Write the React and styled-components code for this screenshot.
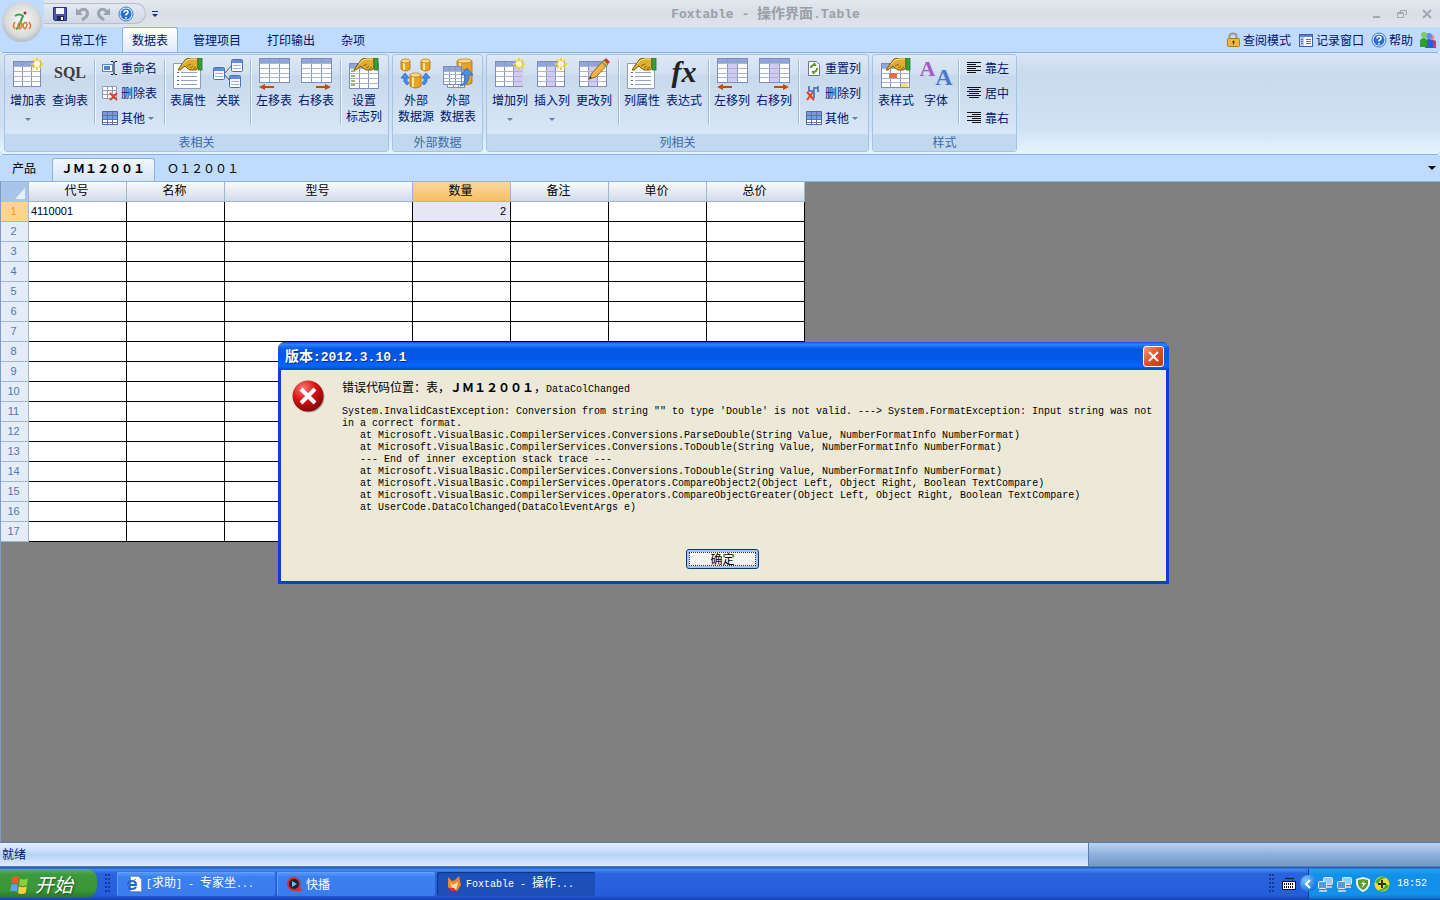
import React from "react";
import styled, { createGlobalStyle, css } from "styled-components";

const COLUMNS = [
  { name: "代号", width: 98 },
  { name: "名称", width: 98 },
  { name: "型号", width: 188 },
  { name: "数量", width: 98, number: true },
  { name: "备注", width: 98 },
  { name: "单价", width: 98 },
  { name: "总价", width: 98 },
];

const ROWS = Array.from({ length: 17 }, (_, i) => (i === 0 ? { 代号: "4110001", 数量: "2" } : {}));

const STACK_TRACE = `System.InvalidCastException: Conversion from string "" to type 'Double' is not valid. ---> System.FormatException: Input string was not in a correct format.
   at Microsoft.VisualBasic.CompilerServices.Conversions.ParseDouble(String Value, NumberFormatInfo NumberFormat)
   at Microsoft.VisualBasic.CompilerServices.Conversions.ToDouble(String Value, NumberFormatInfo NumberFormat)
   --- End of inner exception stack trace ---
   at Microsoft.VisualBasic.CompilerServices.Conversions.ToDouble(String Value, NumberFormatInfo NumberFormat)
   at Microsoft.VisualBasic.CompilerServices.Operators.CompareObject2(Object Left, Object Right, Boolean TextCompare)
   at Microsoft.VisualBasic.CompilerServices.Operators.CompareObjectGreater(Object Left, Object Right, Boolean TextCompare)
   at UserCode.DataColChanged(DataColEventArgs e)`;

/* ---------- icons ---------- */

// 表格底图, hl: 高亮列 (0-3)
function Sheet({ x = 1, y = 3, w = 27, h = 25, hl = -1 }) {
  const cw = w / 3;
  const rh = (h - 5) / 4;
  return (
    <g>
      <rect x={x + 0.5} y={y + 0.5} width={w} height={h} fill="#fff" stroke="#7d8fb5" />
      {hl >= 0 && <rect x={x + 1 + cw * hl} y={y + 5} width={cw} height={h - 5} fill="#d3c9f5" />}
      <rect x={x + 1} y={y + 1} width={w - 1} height="4" fill="#8ea6dc" />
      <path
        d={[1, 2].map((i) => `M${Math.round(x + cw * i) + 0.5} ${y + 1}v${h - 1}`).join("")}
        stroke="#8b97b8"
      />
      <path
        d={[0, 1, 2, 3].map((i) => `M${x + 1} ${Math.round(y + 5 + rh * i) + 0.5}h${w - 1}`).join("")}
        stroke="#a9b4cd"
      />
    </g>
  );
}

const Star = () => (
  <g>
    <path d="M25 0v12M19 6h12M21 2l8 8M29 2l-8 8" stroke="#f5cf2e" strokeWidth="2" />
    <circle cx="25" cy="6" r="3" fill="#fffbd0" />
  </g>
);

const Hand = () => (
  <g>
    <path d="M6 12l4-6 4-5 5-1h7v9l-2 3h-6l-3-2-2-2-5 4z" fill="#dfae2c" stroke="#7a5410" />
    <path d="M15 8l4-2M18 10l3-2M21 11l3-2" stroke="#8c6312" fill="none" />
    <path d="M11 6l4-4 4-1h6" stroke="#fbe68a" fill="none" />
    <rect x="26" y="0" width="4" height="12" fill="#37a03c" stroke="#1f7025" strokeWidth="0.8" />
  </g>
);

const Paper = () => (
  <g>
    <path d="M1.500 5.500h27v25h-27z" fill="#fff" stroke="#8f9bb8" />
    <path d="M5 14.500h2M5 18.500h2M5 22.500h2M5 26.500h2" stroke="#52679b" />
    <path d="M9 14.500h16M9 18.500h16M9 22.500h16M9 26.500h16" stroke="#96a3bf" />
  </g>
);

const Cylinder = ({ x, y, w = 9, h = 12 }) => (
  <g>
    <path
      d={`M${x} ${y + 2}v${h - 4}q${w / 2} 4 ${w} 0v-${h - 4}z`}
      fill="#e8a321"
      stroke="#a8690c"
      strokeWidth="0.8"
    />
    <path d={`M${x + 3} ${y + 3}v${h - 4}`} stroke="#ffe59a" strokeWidth="2" />
    <ellipse cx={x + w / 2} cy={y + 2} rx={w / 2} ry="2" fill="#fbdc82" stroke="#b97a14" strokeWidth="0.8" />
  </g>
);

const MiniWindow = ({ x, y }) => (
  <g>
    <rect x={x + 0.5} y={y + 0.5} width="11" height="12" rx="1" fill="#fff" stroke="#4771b8" />
    <rect x={x + 1} y={y + 1} width="10" height="3" fill="#5d8ee0" />
    <path d={`M${x + 2} ${y + 6.5}h8M${x + 2} ${y + 9.5}h8`} stroke="#9bb0d8" />
  </g>
);

const LeftArrow = () => <path d="M1 29l6-3v2h9v2H7v2z" fill="#c24a10" />;
const RightArrow = () => <path d="M31 29l-6-3v2h-9v2h9v2z" fill="#c24a10" />;

const BIG_ICONS = {
  addTable: <><Sheet /><Star /></>,
  tableProps: <><Paper /><Hand /></>,
  relation: (
    <>
      <path d="M12 16l8-9M12 16l7 8" stroke="#555" fill="none" />
      <MiniWindow x={1} y={9} />
      <MiniWindow x={19} y={1} />
      <MiniWindow x={17} y={17} />
    </>
  ),
  tableLeft: <><Sheet y={0} w={30} h={24} /><LeftArrow /></>,
  tableRight: <><Sheet y={0} w={30} h={24} /><RightArrow /></>,
  flagCol: <><Sheet y={5} w={29} h={25} /><path d="M3 13h4M3 18h4M3 23h4M3 27h4" stroke="#9fb667" strokeWidth="2" /><Hand /></>,
  source: (
    <>
      <Cylinder x={1} y={1} />
      <Cylinder x={21} y={1} />
      <Cylinder x={10} y={15} w={11} h={15} />
      <path d="M7 27q-4-3-3-7H1l4-5 4 5H7q-1 3 2 5zM24 27q4-3 3-7h3l-4-5-4 5h2q1 3-2 5z" fill="#4a8ee8" stroke="#235bb5" strokeWidth="0.7" />
    </>
  ),
  sourceTable: (
    <>
      <Cylinder x={15} y={1} w={15} h={26} />
      <Sheet x={5} y={11} w={17} h={18} />
      <Sheet x={1} y={8} w={18} h={18} />
      <path d="M18 28q6-3 5-11h-4l6-7 6 7h-4q0 10-9 11z" fill="#4a8ee8" stroke="#235bb5" strokeWidth="0.7" />
    </>
  ),
  addCol: <><Sheet hl={2} /><Star /></>,
  insertCol: <><Sheet hl={1} /><Star /></>,
  editCol: (
    <>
      <Sheet hl={1} />
      <path d="M11 21l3-6L26 2l4 4-12 13z" fill="#f3b245" stroke="#9c6415" />
      <path d="M26 2l2-2 4 4-2 2z" fill="#c33b3b" />
      <path d="M24 4l4 4" stroke="#7fa860" strokeWidth="2" />
      <path d="M11 21l1-3 2 2z" fill="#333" />
    </>
  ),
  colLeft: <><Sheet y={0} w={30} h={24} hl={1} /><LeftArrow /></>,
  colRight: <><Sheet y={0} w={30} h={24} hl={1} /><RightArrow /></>,
  tableStyle: (
    <>
      <Sheet y={5} w={28} h={24} />
      <path d="M9 15h8v5H9z" fill="#ef6a35" />
      <path d="M21 25h7v4h-7z" fill="#f5dc8a" />
      <Hand />
    </>
  ),
};

const SMALL_ICONS = {
  rename: (
    <>
      <rect x="0.5" y="4.5" width="10" height="7" fill="#fff" stroke="#5b83c4" />
      <rect x="2" y="6" width="6" height="4" fill="#4e84d6" />
      <path d="M9 1.500h2l1 1 1-1h2M9 14.500h2l1-1 1 1h2M12 2v12" stroke="#111" fill="none" />
    </>
  ),
  deleteTable: (
    <>
      <path d="M.5 1.5h14v12H.5zM.5 5.5h14M.5 9.5h14M5.5 1.5v12M10.5 1.5v12" fill="#fff" stroke="#929bb0" />
      <path d="M8 8l7 7M15 8l-7 7" stroke="#e0412b" strokeWidth="2" />
    </>
  ),
  other: (
    <>
      <path d="M.5 1.5h15v13H.5z" fill="#fff" stroke="#54678f" />
      <path d="M1 2h14v3H1z" fill="#7d97d4" />
      <path d="M1 6h14v4H1z" fill="#6aa2f0" />
      <path d="M1 5.5h14M1 9.5h14M5.5 2v12M10.5 2v12M1 12.5h14" stroke="#5a74aa" />
    </>
  ),
  resetCol: (
    <>
      <path d="M2.500 1.500h8l3 3v11h-11z" fill="#fff" stroke="#6b7890" />
      <path d="M5 8q0-3 4-3l-1-2M11 8q0 4-4 4l1 2" stroke="#5c9b22" strokeWidth="2" fill="none" />
    </>
  ),
  deleteCol: (
    <>
      <path d="M3 1v5h5V3h4V1M8 6v7M12 2v5" stroke="#5a7fc2" strokeWidth="2" fill="none" />
      <path d="M1 7l7 8M7 7l-6 8" stroke="#e0412b" strokeWidth="2" />
    </>
  ),
  alignLeft: <path d="M1 2.500h14M1 4.500h9M1 6.500h14M1 8.500h9M1 10.500h14M1 12.500h9" stroke="#111" />,
  alignCenter: <path d="M1 2.500h14M3 4.500h10M1 6.500h14M3 8.500h10M1 10.500h14M3 12.500h10" stroke="#111" />,
  alignRight: <path d="M1 2.500h14M6 4.500h9M1 6.500h14M6 8.500h9M1 10.500h14M6 12.500h9" stroke="#111" />,
  save: (
    <>
      <path d="M1.500 1.500h13v13h-12l-1-1z" fill="#4c53b5" stroke="#2c3180" />
      <path d="M4 2h8v6H4z" fill="#f2f5ff" />
      <path d="M5 10h7v5H5z" fill="#222a55" />
      <path d="M9 11h2v3H9z" fill="#fff" />
    </>
  ),
  undo: (
    <>
      <path d="M2 2v7h7z" fill="#9ca3b0" />
      <path d="M5 6q3-4 7-2 3 3 0 7l-4 3" stroke="#9ca3b0" strokeWidth="3" fill="none" />
    </>
  ),
  redo: (
    <>
      <path d="M14 2v7H7z" fill="#9ca3b0" />
      <path d="M11 6Q8 2 4 4 1 7 4 11l4 3" stroke="#9ca3b0" strokeWidth="3" fill="none" />
    </>
  ),
  help: (
    <>
      <circle cx="8" cy="8" r="7" fill="#e8f1ff" stroke="#3d78cc" />
      <circle cx="8" cy="8" r="5.500" fill="#2c6fd2" />
      <path d="M6 6.500q0-2 2-2t2 2q0 1-2 2v1M8 11v1.500" stroke="#fff" strokeWidth="1.500" fill="none" />
    </>
  ),
  lock: (
    <>
      <path d="M4.500 7V4q0-2.500 3.500-2.500T11.500 4v3" stroke="#a19a86" strokeWidth="2" fill="none" />
      <rect x="2.500" y="6.500" width="12" height="8" rx="1" fill="#f4b63c" stroke="#b37a14" />
      <path d="M8.500 8.500v4M7 10h3" stroke="#5a3c05" />
    </>
  ),
  record: (
    <>
      <rect x="1.500" y="2.500" width="13" height="12" fill="#fff" stroke="#3e5fa8" />
      <path d="M2 3h12v2H2z" fill="#5b83d6" />
      <path d="M2 5h4v9H2z" fill="#b9ccf0" />
      <path d="M3 7.500h2M3 9.500h2M3 11.500h2M8 7.500h5M8 9.500h5M8 11.500h5" stroke="#5972a6" />
    </>
  ),
  people: (
    <>
      <circle cx="12" cy="5" r="2.500" fill="#f08a8a" />
      <path d="M9 16V9q3-3 7 0v7z" fill="#d93a4a" />
      <circle cx="9" cy="4" r="3" fill="#5b8cf0" />
      <path d="M5 16V9q4-4 8 0v7z" fill="#2d5dd8" />
      <circle cx="4" cy="3" r="3" fill="#7dce62" />
      <path d="M0 15V8q4-4 7 0v7z" fill="#2f9e2f" />
    </>
  ),
  ie: (
    <>
      <path d="M4.500.500h8l3 3v12h-11z" fill="#fff" stroke="#8b97ac" />
      <path d="M2 9h8q0-4-4-4T2 9t4 4q3 0 4-2" stroke="#2563c9" strokeWidth="2" fill="none" />
      <path d="M1 13Q0 9 10 3" stroke="#3c8ae8" fill="none" />
    </>
  ),
  player: (
    <>
      <path d="M8 1a7 7 0 1 0 0 14h7l-1-4A7 7 0 0 0 8 1z" fill="#e02a2a" />
      <circle cx="8" cy="8" r="5" fill="#16233c" />
      <path d="M6 5l5 3-5 3z" fill="#6ac0ff" />
    </>
  ),
  fox: (
    <>
      <path d="M2 1l4 4 3-1 4-4 2 9-4 6H6L2 11z" fill="#f0862b" />
      <path d="M4 6l3 3 5-3-2 8H7z" fill="#ffe3a8" />
      <path d="M2 12l4 3h5l-3-3z" fill="#d8331f" />
    </>
  ),
  network: (
    <>
      <rect x="6.500" y="1.500" width="9" height="7" rx="1" fill="#8fd0ff" stroke="#dcebf7" />
      <path d="M8 11h7" stroke="#bccbe0" strokeWidth="2" />
      <rect x="1.500" y="5.500" width="8" height="7" rx="1" fill="#4f9ce0" stroke="#dcebf7" />
      <path d="M2 15h8" stroke="#bccbe0" strokeWidth="2" />
    </>
  ),
  shield: (
    <>
      <path d="M8 1l7 2v5q-1 5-7 8-6-3-7-8V3z" fill="#f2f4ea" />
      <path d="M8 3l5 1v4q-1 4-5 6-4-2-5-6V4z" fill="#5d9b2c" />
      <path d="M10 4L6 8h2l-1 4 4-5H8z" fill="#fff" />
    </>
  ),
  plus: (
    <>
      <circle cx="8" cy="8" r="7.500" fill="#f6d92d" />
      <path d="M1 6Q6-1 13 2 6 2 4 8zM15 10Q10 17 3 14q7 0 9-6z" fill="#3fae34" />
      <path d="M8 4v8M4 8h8" stroke="#1b3c14" strokeWidth="2" />
    </>
  ),
  keyboard: (
    <>
      <path d="M4 3l2-1 1 1 2-1 1 1 3-1" stroke="#111" fill="none" />
      <rect x="1.500" y="5.500" width="13" height="8" fill="#fff" stroke="#111" />
      <path d="M3 8h10M3 11h10" stroke="#111" strokeWidth="2" strokeDasharray="1 1" />
    </>
  ),
  flag: (
    <>
      <path d="M3 3q4-2 6 0L8 9Q5 7 2 9z" fill="#ee5a2c" />
      <path d="M10 4q3 2 7 0l-1 6q-4 2-7 0z" fill="#8fce3b" />
      <path d="M2 10q3-2 6 0l-1 6q-3-2-6 0z" fill="#5aa2f5" />
      <path d="M9 11q3 2 7 0l-1 6q-4 2-7 0z" fill="#fbd042" />
    </>
  ),
};

function Icon({ name, size = 16, box = 16 }) {
  return (
    <svg width={size} height={size} viewBox={`0 0 ${box} ${box}`} aria-hidden="true">
      {SMALL_ICONS[name]}
    </svg>
  );
}

function BigIcon({ name }) {
  if (name === "sql") return <SqlMark>SQL</SqlMark>;
  if (name === "fx") return <FxMark>fx</FxMark>;
  if (name === "font") return <FontMark><b>A</b><i>A</i></FontMark>;
  return <svg width="32" height="32" viewBox="0 0 32 32" aria-hidden="true">{BIG_ICONS[name]}</svg>;
}

/* ---------- ribbon ---------- */

function Big({ icon, label, menu, narrow }) {
  return (
    <BigButton $narrow={narrow}>
      <BigIcon name={icon} />
      <BigLabel>{label}</BigLabel>
      {menu && <Caret />}
    </BigButton>
  );
}

function Small({ icon, label, menu }) {
  return (
    <SmallButton>
      <Icon name={icon} />
      {label}
      {menu && <Caret />}
    </SmallButton>
  );
}

function Group({ title, children }) {
  return (
    <GroupBox>
      <GroupBody>{children}</GroupBody>
      <GroupTitle>{title}</GroupTitle>
    </GroupBox>
  );
}

function Ribbon() {
  return (
    <RibbonPanel>
      <Group title="表相关">
        <Big icon="addTable" label="增加表" menu />
        <Big icon="sql" label="查询表" />
        <Divider />
        <SmallStack>
          <Small icon="rename" label="重命名" />
          <Small icon="deleteTable" label="删除表" />
          <Small icon="other" label="其他" menu />
        </SmallStack>
        <Divider />
        <Big icon="tableProps" label="表属性" />
        <Big icon="relation" label="关联" narrow />
        <Divider />
        <Big icon="tableLeft" label="左移表" />
        <Big icon="tableRight" label="右移表" />
        <Divider />
        <Big icon="flagCol" label={"设置\n标志列"} />
      </Group>
      <Group title="外部数据">
        <Big icon="source" label={"外部\n数据源"} />
        <Big icon="sourceTable" label={"外部\n数据表"} />
      </Group>
      <Group title="列相关">
        <Big icon="addCol" label="增加列" menu />
        <Big icon="insertCol" label="插入列" menu />
        <Big icon="editCol" label="更改列" />
        <Divider />
        <Big icon="tableProps" label="列属性" />
        <Big icon="fx" label="表达式" />
        <Divider />
        <Big icon="colLeft" label="左移列" />
        <Big icon="colRight" label="右移列" />
        <Divider />
        <SmallStack>
          <Small icon="resetCol" label="重置列" />
          <Small icon="deleteCol" label="删除列" />
          <Small icon="other" label="其他" menu />
        </SmallStack>
      </Group>
      <Group title="样式">
        <Big icon="tableStyle" label="表样式" />
        <Big icon="font" label="字体" narrow />
        <Divider />
        <SmallStack>
          <Small icon="alignLeft" label="靠左" />
          <Small icon="alignCenter" label="居中" />
          <Small icon="alignRight" label="靠右" />
        </SmallStack>
      </Group>
    </RibbonPanel>
  );
}

function Header() {
  return (
    <Top>
      <Orb aria-label="Foxtable">
        <svg width="22" height="22" viewBox="0 0 22 22" aria-hidden="true">
          <path d="M4 5q4-3 8 0L9 12q-1 5-4 6" stroke="#35a548" strokeWidth="2" fill="none" />
          <circle cx="14" cy="2" r="1.500" fill="#8c3a2a" />
          <path d="M4 11q-3 4 0 7M9 11q4 2 0 7-4-3 0-7M14 11q4 2 0 7-4-3 0-7M18 11q3 4 0 7" stroke="#e07a35" strokeWidth="1.500" fill="none" />
        </svg>
      </Orb>
      <TopRows>
        <TitleBar>
          <QuickBar>
            <IconButton aria-label="保存"><Icon name="save" /></IconButton>
            <IconButton aria-label="撤销"><Icon name="undo" /></IconButton>
            <IconButton aria-label="重做"><Icon name="redo" /></IconButton>
            <IconButton aria-label="帮助"><Icon name="help" /></IconButton>
          </QuickBar>
          <IconButton aria-label="自定义">
            <svg width="8" height="8" viewBox="0 0 8 8"><path d="M1 1.500h6" stroke="#15316b" /><path d="M1 4h6L4 7z" fill="#15316b" /></svg>
          </IconButton>
          <AppTitle><Mono13>Foxtable - </Mono13>操作界面<Mono13>.Table</Mono13></AppTitle>
          <WindowButtons>
            <IconButton aria-label="最小化"><svg width="10" height="10"><path d="M1 8h7" stroke="#a0a8b4" strokeWidth="2" /></svg></IconButton>
            <IconButton aria-label="还原">
              <svg width="10" height="10"><path d="M3.500 3V1.500h6v4H8M.500 4.500h6v4h-6zM.500 3.500h6" stroke="#a0a8b4" fill="none" /></svg>
            </IconButton>
            <IconButton aria-label="关闭"><svg width="10" height="10"><path d="M1 1l8 8M9 1L1 9" stroke="#a0a8b4" strokeWidth="2" /></svg></IconButton>
          </WindowButtons>
        </TitleBar>
        <MenuBar>
          <MenuTab>日常工作</MenuTab>
          <MenuTab $active>数据表</MenuTab>
          <MenuTab>管理项目</MenuTab>
          <MenuTab>打印输出</MenuTab>
          <MenuTab>杂项</MenuTab>
          <MenuRight>
            <TextButton><Icon name="lock" />查阅模式</TextButton>
            <TextButton><Icon name="record" />记录窗口</TextButton>
            <TextButton><Icon name="help" />帮助</TextButton>
            <IconButton aria-label="用户"><Icon name="people" /></IconButton>
          </MenuRight>
        </MenuBar>
      </TopRows>
    </Top>
  );
}

function DataGrid() {
  return (
    <Grid>
      <colgroup>
        <col style={{ width: 28 }} />
        {COLUMNS.map((c) => <col key={c.name} style={{ width: c.width }} />)}
      </colgroup>
      <thead>
        <tr>
          <Corner><svg width="10" height="11" viewBox="0 0 10 11"><path d="M10 0v11H0z" fill="#e6eefa" /></svg></Corner>
          {COLUMNS.map((c) => <ColHead key={c.name} $active={c.number}>{c.name}</ColHead>)}
        </tr>
      </thead>
      <tbody>
        {ROWS.map((row, i) => (
          <tr key={i}>
            <RowHead $active={i === 0}>{i + 1}</RowHead>
            {COLUMNS.map((c) => (
              <Cell key={c.name} $right={c.number} $selected={c.number && i === 0}>{row[c.name]}</Cell>
            ))}
          </tr>
        ))}
      </tbody>
    </Grid>
  );
}

function ErrorDialog() {
  return (
    <Dialog role="dialog" aria-labelledby="dlg-title">
      <DialogBar>
        <DialogTitle id="dlg-title">版本<Mono13>:2012.3.10.1</Mono13></DialogTitle>
        <CloseButton aria-label="关闭">
          <svg width="13" height="13"><path d="M2 2l9 9M11 2l-9 9" stroke="#fff" strokeWidth="2" /></svg>
        </CloseButton>
      </DialogBar>
      <DialogBody>
        <Message>
          <svg width="34" height="34" viewBox="0 0 34 34" aria-hidden="true">
            <defs>
              <radialGradient id="err" cx="0.35" cy="0.25" r="0.8">
                <stop offset="0" stopColor="#f47a70" />
                <stop offset="0.5" stopColor="#d81414" />
                <stop offset="1" stopColor="#7e0505" />
              </radialGradient>
            </defs>
            <circle cx="18" cy="18" r="15.500" fill="#00000044" />
            <circle cx="17" cy="17" r="15.500" fill="url(#err)" />
            <path d="M10 10l14 14M24 10L10 24" stroke="#fff" strokeWidth="4" />
          </svg>
          <MessageText>
            <Where>错误代码位置：表，<b>ＪＭ１２００１</b>，<Mono>DataColChanged</Mono></Where>
            <Trace>{STACK_TRACE}</Trace>
          </MessageText>
        </Message>
        <OkButton autoFocus>确定</OkButton>
      </DialogBody>
    </Dialog>
  );
}

function Taskbar() {
  return (
    <TaskRow>
      <StartButton><Icon name="flag" size={20} box={18} />开始</StartButton>
      <Grip />
      <Task><Icon name="ie" /><span><Mono>[</Mono>求助<Mono>] - </Mono>专家坐<Mono>...</Mono></span></Task>
      <Task><Icon name="player" />快播</Task>
      <Task $active><Icon name="fox" /><span><Mono>Foxtable - </Mono>操作<Mono>...</Mono></span></Task>
      <Spacer />
      <Grip />
      <KeyboardButton aria-label="输入法"><Icon name="keyboard" /></KeyboardButton>
      <Tray>
        <TrayToggle aria-label="隐藏图标">
          <svg width="8" height="10"><path d="M6 1L2 5l4 4" stroke="#fff" strokeWidth="2" fill="none" /></svg>
        </TrayToggle>
        <TrayIcons>
          <Icon name="network" />
          <Icon name="network" />
          <Icon name="shield" />
          <Icon name="plus" />
        </TrayIcons>
        <Clock>18:52</Clock>
      </Tray>
    </TaskRow>
  );
}

function App() {
  return (
    <>
      <GlobalStyle />
      <Screen>
        <Header />
        <Ribbon />
        <SheetTabs>
          <SheetTab>产品</SheetTab>
          <SheetTab $active>ＪＭ１２００１</SheetTab>
          <SheetTab>Ｏ１２００１</SheetTab>
          <Spacer />
          <IconButton aria-label="更多"><svg width="8" height="5"><path d="M0 0h8L4 4z" fill="#000" /></svg></IconButton>
        </SheetTabs>
        <Workspace>
          <DataGrid />
        </Workspace>
        <StatusBar>
          <StatusText>就绪</StatusText>
          <StatusEnd />
        </StatusBar>
        <Taskbar />
      </Screen>
      <ErrorDialog />
    </>
  );
}

/* ---------- styles ---------- */

const GlobalStyle = createGlobalStyle`
  * { box-sizing: border-box; }
  body {
    margin: 0;
    overflow: hidden;
    font: 12px/16px "Noto Sans CJK SC", sans-serif;
    color: #000;
  }
  button {
    padding: 0;
    border: 0;
    background: none;
    font: inherit;
    color: inherit;
  }
  svg { display: block; flex: none; }
`;

const Screen = styled.div`
  height: 100vh;
  display: flex;
  flex-direction: column;
`;

const Mono = styled.span`
  font-family: "Liberation Mono", monospace;
  font-size: 10px;
  white-space: pre;
`;

const Mono13 = styled(Mono)`
  font-size: 13px;
`;

const Spacer = styled.div`
  flex: 1;
`;

const Top = styled.header`
  flex: none;
  display: flex;
  height: 52px;
  background: #bfdbff;
`;

const TopRows = styled.div`
  flex: 1;
  display: flex;
  flex-direction: column;
`;

const Orb = styled.button`
  flex: none;
  display: flex;
  align-items: center;
  justify-content: center;
  width: 40px;
  height: 40px;
  margin: 2px 2px 0;
  border-radius: 50%;
  background: radial-gradient(circle at 50% 45%, #f4f4f2 10%, #d9dadb 55%, #b4bac2 75%, #dfe8f3);
`;

const TitleBar = styled.div`
  display: flex;
  align-items: center;
  height: 27px;
  background: linear-gradient(#e3e8ee, #d8dee7 50%, #e0e5ec);
`;

const QuickBar = styled.div`
  display: flex;
  align-items: center;
  gap: 6px;
  width: 102px;
  height: 21px;
  margin-right: 5px;
  padding-left: 8px;
  border: 1px solid #b5bfce;
  border-left: 0;
  border-radius: 0 11px 11px 0;
  background: linear-gradient(#e4e9f1, #cfd8e5);
`;

const IconButton = styled.button`
  display: flex;
  align-items: center;
  justify-content: center;
`;

const AppTitle = styled.h1`
  flex: 1;
  margin: 0;
  text-align: center;
  font-size: 14px;
  line-height: 20px;
  font-weight: 700;
  color: #9a9ea6;
`;

const WindowButtons = styled.div`
  display: flex;
  gap: 15px;
  padding-right: 8px;
`;

const MenuBar = styled.nav`
  display: flex;
  height: 25px;
  padding-left: 2px;
  color: #00156e;
`;

const MenuTab = styled.button`
  height: 25px;
  padding: 0 12px;
  border: 1px solid transparent;
  ${(p) =>
    p.$active &&
    css`
      margin: 0 2px;
      padding: 0 9px;
      border-color: #8db2e3;
      border-bottom: 0;
      border-radius: 3px 3px 0 0;
      background: linear-gradient(#fff, #dfeaf7);
    `}
`;

const MenuRight = styled.div`
  flex: 1;
  display: flex;
  justify-content: flex-end;
  align-items: center;
  gap: 7px;
  padding-right: 4px;
`;

const TextButton = styled.button`
  display: flex;
  align-items: center;
  gap: 2px;
`;

const RibbonPanel = styled.section`
  flex: none;
  display: flex;
  gap: 3px;
  padding: 1px 4px 2px;
  border: 1px solid #8db2e3;
  border-width: 1px 0;
  border-radius: 4px;
  background: linear-gradient(#dbe6f4, #c9daed 20%, #cfe2f5 75%, #e6f6ff);
  color: #00156e;
`;

const GroupBox = styled.div`
  display: flex;
  flex-direction: column;
  border: 1px solid #a5c3e6;
  border-radius: 3px;
  overflow: hidden;
  background: linear-gradient(#dee8f5, #d1dff0 20%, #c8d9ed 22%, #dcebf8);
`;

const GroupBody = styled.div`
  display: flex;
  height: 79px;
  padding: 3px 3px 0 2px;
`;

const GroupTitle = styled.div`
  height: 17px;
  line-height: 16px;
  text-align: center;
  background: #c1d8f0;
  color: #3e6aaa;
`;

const Caret = styled.span`
  flex: none;
  width: 0;
  border: 3px solid transparent;
  border-top-color: #6580ab;
  border-bottom: 0;
`;

const BigButton = styled.button`
  display: flex;
  flex-direction: column;
  align-items: center;
  width: ${(p) => (p.$narrow ? 38 : 42)}px;

  ${Caret} {
    margin-top: 10px;
  }
`;

const BigLabel = styled.span`
  margin-top: 2px;
  white-space: pre;
`;

const SmallStack = styled.div`
  display: flex;
  flex-direction: column;
`;

const SmallButton = styled.button`
  display: flex;
  align-items: center;
  gap: 3px;
  height: 25px;
  padding: 0 4px 5px 5px;
`;

const Divider = styled.div`
  flex: none;
  width: 2px;
  height: 64px;
  margin: 2px 1px 0 3px;
  border-left: 1px solid #9dbbdc;
  background: #edf5fd;
`;

const SqlMark = styled.span`
  height: 32px;
  font: 700 16px/30px "Liberation Serif", serif;
  color: #3c3c3c;
`;

const FxMark = styled.span`
  height: 32px;
  font: italic 700 30px/28px "Liberation Serif", serif;
  color: #222;
`;

const FontMark = styled.span`
  display: flex;
  height: 32px;
  font: 700 22px/22px "Liberation Serif", serif;

  b {
    color: #a45ac8;
  }
  i {
    padding-top: 8px;
    font-style: normal;
    font-size: 24px;
    color: #4a78cc;
  }
`;

const SheetTabs = styled.nav`
  flex: none;
  display: flex;
  align-items: flex-end;
  height: 27px;
  padding: 0 4px;
  border-bottom: 1px solid #8db2e3;
  background: #bfdbff;
`;

const SheetTab = styled.button`
  height: 23px;
  padding: 0 12px 4px 8px;
  ${(p) =>
    p.$active &&
    css`
      margin: 0 4px 0 4px;
      padding: 0 9px 4px 8px;
      border: 1px solid #8db2e3;
      border-bottom: 0;
      border-radius: 3px 3px 0 0;
      background: linear-gradient(#f4f8fd, #d5e4f5);
      font-weight: 700;
    `}

  & ~ ${IconButton} {
    height: 26px;
  }
`;

const Workspace = styled.main`
  flex: 1;
  min-height: 0;
  border-left: 1px solid #7e9cc4;
  background: #808080;
`;

const Grid = styled.table`
  table-layout: fixed;
  width: 804px;
  border-collapse: separate;
  border-spacing: 0;
`;

const Corner = styled.td`
  height: 20px;
  padding: 3px 3px 0 14px;
  border-right: 1px solid #9eb6ce;
  background: #a9c4e9;
`;

const ColHead = styled.th`
  height: 20px;
  padding: 0 2px 3px 0;
  border-right: 1px solid #9eb6ce;
  border-bottom: 1px solid #9eb6ce;
  background: ${(p) => (p.$active ? "linear-gradient(#fad6a0, #f5c063)" : "linear-gradient(#f9fcfd, #d3dbe9)")};
  font-weight: 400;
`;

const gridText = css`
  height: 20px;
  font-family: "Liberation Sans", sans-serif;
  font-size: 11px;
  line-height: 16px;
`;

const RowHead = styled.th`
  ${gridText}
  padding: 0 2px 2px 0;
  border-right: 1px solid #9eb6ce;
  border-bottom: 1px solid #9eb6ce;
  background: ${(p) => (p.$active ? "#ffd58d" : "#e4ecf7")};
  color: ${(p) => (p.$active ? "#f0a020" : "#4a7ab5")};
  font-weight: 400;
`;

const Cell = styled.td`
  ${gridText}
  padding: 0 4px 2px 2px;
  border-right: 1px solid #000;
  border-bottom: 1px solid #000;
  background: ${(p) => (p.$selected ? "#e6e6f5" : "#fff")};
  text-align: ${(p) => (p.$right ? "right" : "left")};
`;

const StatusBar = styled.footer`
  flex: none;
  display: flex;
  height: 25px;
  border-top: 1px solid #567db0;
  border-bottom: 1px solid #567db0;
  background: linear-gradient(#e3efff, #c4dcfb 40%, #b5d2f8 50%, #dcebff);
`;

const StatusText = styled.span`
  flex: 1;
  padding-left: 2px;
  line-height: 22px;
  color: #00156e;
`;

const StatusEnd = styled.div`
  width: 352px;
  border-left: 1px solid #567db0;
  background: linear-gradient(#bcd3f2, #8fb0dc 50%, #7698c8);
`;

const TaskRow = styled.footer`
  flex: none;
  display: flex;
  align-items: center;
  height: 33px;
  background: linear-gradient(#1f4fb5, #3f8cf3 8%, #2a63dc 20%, #245edb 85%, #1941a5);
  color: #fff;
`;

const StartButton = styled.button`
  display: flex;
  align-items: center;
  gap: 6px;
  width: 97px;
  height: 29px;
  margin-right: 8px;
  padding-left: 9px;
  border-radius: 0 10px 12px 0;
  background: linear-gradient(#5fae5c, #3c9a3c 20%, #389638 75%, #2a742b);
  font-size: 19px;
  line-height: 24px;
  font-style: italic;
  text-shadow: 1px 1px 2px #1c4d1c;
`;

const Grip = styled.div`
  width: 6px;
  height: 20px;
  margin-right: 6px;
  background: radial-gradient(circle at 1px 1px, #143a92 1px, transparent 1px) 0 0 / 3px 4px;
`;

const Task = styled.button`
  display: flex;
  align-items: center;
  gap: 4px;
  width: 158px;
  height: 24px;
  margin-right: 2px;
  padding-left: 9px;
  border-radius: 2px;
  background: linear-gradient(#5c9bfb, #3c7ff0 20%, #3a7bee);
  box-shadow: inset 1px 1px 0 #629ffa;
  ${(p) =>
    p.$active &&
    css`
      background: #1d4fb8;
      box-shadow: inset 1px 1px 1px #12357f;
    `}
`;

const KeyboardButton = styled(IconButton)`
  margin-right: 11px;
`;

const Tray = styled.div`
  display: flex;
  align-items: center;
  height: 30px;
  padding-right: 13px;
  border-left: 1px solid #0b3c8f;
  background: linear-gradient(#1fa5f0, #1290e9 20%, #1391e9 85%, #0d6fc8);
`;

const TrayToggle = styled(IconButton)`
  flex: none;
  width: 17px;
  height: 17px;
  margin-left: -9px;
  border-radius: 50%;
  background: radial-gradient(circle at 35% 30%, #7fc8ff, #1b74dd 70%);
`;

const TrayIcons = styled.div`
  display: flex;
  gap: 3px;
`;

const Clock = styled(Mono)`
  margin-left: 7px;
`;

const Dialog = styled.section`
  position: fixed;
  top: 342px;
  left: 278px;
  width: 891px;
  padding: 0 3px 3px;
  border-radius: 7px 7px 0 0;
  background: #0a3fd0;
`;

const DialogBar = styled.header`
  display: flex;
  align-items: center;
  justify-content: space-between;
  height: 28px;
  margin: 0 -3px;
  padding: 0 5px 0 7px;
  border-radius: 7px 7px 0 0;
  background: linear-gradient(#0a50d8, #2b86ff 8%, #0558e4 25%, #0458e8 60%, #0567fb 85%, #0446cf);
`;

const DialogTitle = styled.h2`
  margin: 0;
  font-size: 14px;
  line-height: 20px;
  font-weight: 700;
  color: #fff;
  text-shadow: 1px 1px 0 #0a2a80;
`;

const CloseButton = styled(IconButton)`
  width: 21px;
  height: 21px;
  border: 1px solid #fff;
  border-radius: 3px;
  background: linear-gradient(135deg, #f0997b, #df4f27 50%, #c43a12);
`;

const DialogBody = styled.div`
  display: flex;
  flex-direction: column;
  align-items: center;
  padding: 9px 12px 12px 10px;
  background: #ece9d8;
`;

const Message = styled.div`
  display: flex;
  gap: 17px;
  width: 100%;
`;

const MessageText = styled.div`
  flex: 1;
`;

const Where = styled.p`
  margin: 0 0 8px;
`;

const Trace = styled.pre`
  margin: 0 0 35px;
  font: 10px/12px "Liberation Mono", monospace;
  white-space: pre-wrap;
`;

const OkButton = styled.button`
  width: 73px;
  height: 20px;
  border: 1px solid #003c74;
  border-radius: 3px;
  outline: 1px dotted #333;
  outline-offset: -4px;
  background: linear-gradient(#fff, #ecebe5);
  box-shadow: inset 0 0 0 2px #a9c3ee;
  line-height: 16px;
`;

export default App;
